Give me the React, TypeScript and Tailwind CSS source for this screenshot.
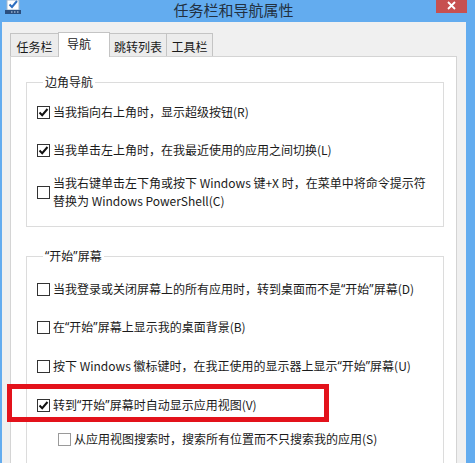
import React from 'react';

const font = { fontFamily: '"Noto Sans CJK SC", "Noto Sans", sans-serif' };

const AppIcon = () => (
    <svg width="16" height="15" viewBox="0 0 16 15">
        <rect x="2" y="0" width="12" height="10" fill="#ffffff" stroke="#9fb7cf" strokeWidth="1" />
        <path d="M4.5 4.5 L7 7 L12 1" fill="none" stroke="#2f6fc0" strokeWidth="2" />
        <rect x="0" y="10" width="16" height="4" fill="#2b4e7e" />
        <rect x="6" y="11.5" width="1.5" height="1" fill="#cfe0f5" />
        <rect x="9" y="11.5" width="1.5" height="1" fill="#cfe0f5" />
        <rect x="12" y="11.5" width="1.5" height="1" fill="#cfe0f5" />
    </svg>
);

// narrow curly quotes, like the proportional ones in the original UI font
const Q = ({ children }: { children: React.ReactNode }) => (
    <>
        <span className="align-top font-['Noto_Sans']">“</span>
        {children}
        <span className="align-top font-['Noto_Sans']">”</span>
    </>
);

const Checkbox = ({ checked, dim }: { checked?: boolean; dim?: boolean }) => (
    <span
        className={`flex h-[13px] w-[13px] shrink-0 items-center justify-center border bg-white ${
            dim ? 'border-[#9a9a9a]' : 'border-[#333333]'
        }`}
    >
        {checked && (
            <svg width="11" height="11" viewBox="0 0 11 11">
                <path d="M1.5 5.5 L4.2 8.2 L9.5 2" fill="none" stroke="#111111" strokeWidth="2" />
            </svg>
        )}
    </span>
);

const Row = ({
    checked,
    dim,
    className,
    children
}: {
    checked?: boolean;
    dim?: boolean;
    className?: string;
    children: React.ReactNode;
}) => (
    <div className={`flex items-center gap-[3px] whitespace-nowrap text-[12px] leading-[18px] text-[#1a1a1a] ${className ?? ''}`}>
        <Checkbox checked={checked} dim={dim} />
        <span>{children}</span>
    </div>
);

const tabs = [
    { label: '任务栏', w: 'w-[48px]', border: 'border-l border-t' },
    { label: '导航', w: 'w-[52px]', border: 'border-l border-t border-r', active: true },
    { label: '跳转列表', w: 'w-[57px]', border: 'border-t border-r' },
    { label: '工具栏', w: 'w-[46px]', border: 'border-t border-r' }
];

export default function App() {
    return (
        <div style={font} className="relative flex h-[463px] w-[475px] flex-col overflow-hidden bg-[#63acef]">
            {/* Title bar */}
            <div className="grid h-[22px] shrink-0 grid-cols-[1fr_auto_1fr] pr-[8px]">
                <div className="pl-[5px]">
                    <AppIcon />
                </div>
                <div className="text-[15px] leading-[20px] text-[#22303f]">任务栏和导航属性</div>
                <div className="flex justify-end">
                    <div className="flex h-[13px] w-[31px] items-start justify-center bg-[#c75050] pt-[1px]">
                        <svg width="9" height="9" viewBox="0 0 9 9">
                            <path d="M1 1 L8 8 M8 1 L1 8" stroke="#ffffff" strokeWidth="1.8" />
                        </svg>
                    </div>
                </div>
            </div>

            {/* Dialog body */}
            <div className="ml-[2px] mr-[9px] flex flex-1 flex-col bg-[#f0f0f0] pl-[8px] pr-[9px] pt-[10px]">
                <div className="flex h-[24px] items-end text-[12px] text-[#1a1a1a]">
                    {tabs.map((t) =>
                        t.active ? (
                            <div
                                key={t.label}
                                className={`relative z-10 -mb-px flex h-[25px] ${t.w} ${t.border} items-start justify-center border-[#c4c4c4] bg-white pr-[10px] pt-[3px] leading-[16px]`}
                            >
                                {t.label}
                            </div>
                        ) : (
                            <div
                                key={t.label}
                                className={`flex h-[23px] ${t.w} ${t.border} items-start justify-center border-[#c4c4c4] bg-[#ececec] pt-[5px] leading-[16px]`}
                            >
                                {t.label}
                            </div>
                        )
                    )}
                </div>

                <div className="flex-1 border border-[#d4d4d4] bg-white pl-[15px] pr-[12px]">
                    {/* 边角导航 */}
                    <fieldset className="mt-[17px] border border-[#dcdcdc] pb-[16px] pl-[10px]">
                        <legend className="ml-[6px] px-[2px] text-[12px] leading-[16px] text-[#1a1a1a]">边角导航</legend>
                        <Row checked className="mt-[13px]">当我指向右上角时，显示超级按钮(R)</Row>
                        <Row checked className="mt-[20px]">当我单击左上角时，在我最近使用的应用之间切换(L)</Row>
                        <Row className="mt-[15px]">
                            当我右键单击左下角或按下 Windows 键+X 时，在菜单中将命令提示符
                            <br />
                            替换为 Windows PowerShell(C)
                        </Row>
                    </fieldset>

                    {/* 开始屏幕 */}
                    <fieldset className="mt-[21px] border border-[#dcdcdc] pb-[16px] pl-[10px]">
                        <legend className="ml-[6px] px-[2px] text-[12px] leading-[16px] text-[#1a1a1a]">
                            <Q>开始</Q>屏幕
                        </legend>
                        <Row className="mt-[16px]">
                            当我登录或关闭屏幕上的所有应用时，转到桌面而不是<Q>开始</Q>屏幕(D)
                        </Row>
                        <Row className="mt-[20px]">
                            在<Q>开始</Q>屏幕上显示我的桌面背景(B)
                        </Row>
                        <Row className="mt-[21px]">
                            按下 Windows 徽标键时，在我正使用的显示器上显示<Q>开始</Q>屏幕(U)
                        </Row>
                        <Row checked className="mt-[21px]">
                            转到<Q>开始</Q>屏幕时自动显示应用视图(V)
                        </Row>
                        <Row dim className="ml-[21px] mt-[16px]">从应用视图搜索时，搜索所有位置而不只搜索我的应用(S)</Row>
                    </fieldset>
                </div>
            </div>

            {/* red annotation box */}
            <div className="absolute left-[7px] top-[384px] h-[38px] w-[322px] border-[5px] border-[#e3121b]" />
        </div>
    );
}
